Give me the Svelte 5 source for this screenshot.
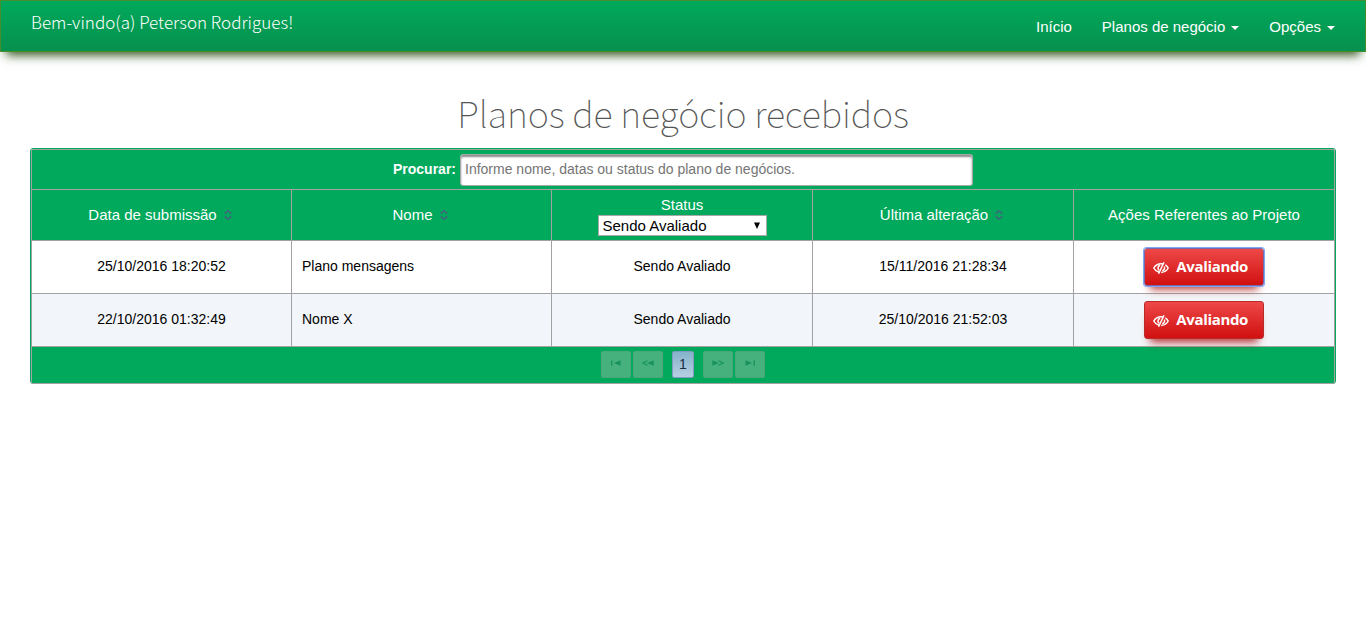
<script>
  const rows = [
    { sent: '25/10/2016 18:20:52', name: 'Plano mensagens', status: 'Sendo Avaliado', changed: '15/11/2016 21:28:34', focused: true },
    { sent: '22/10/2016 01:32:49', name: 'Nome X', status: 'Sendo Avaliado', changed: '25/10/2016 21:52:03', focused: false }
  ];
</script>

{#snippet sort()}
  <svg class="sort" width="8" height="10" viewBox="0 0 8 10"><path d="M.7 3.600 4 .8l3.300 2.800M.7 6.400 4 9.200l3.300-2.800" /></svg>
{/snippet}

<header>
  <div class="brand">Bem-vindo(a) Peterson Rodrigues!</div>
  <nav>
    <a href="#inicio">Início</a>
    <a href="#planos">Planos de negócio<i class="caret"></i></a>
    <a href="#opcoes">Opções<i class="caret"></i></a>
  </nav>
</header>

<main>
  <h1>Planos de negócio recebidos</h1>
  <section class="table">
    <div class="search">
      <label for="q">Procurar:</label>
      <input id="q" placeholder="Informe nome, datas ou status do plano de negócios." />
    </div>
    <div class="row head">
      <div class="sortable">Data de submissão{@render sort()}</div>
      <div class="sortable">Nome{@render sort()}</div>
      <div class="status">
        <span>Status</span>
        <div class="select"><span>Sendo Avaliado</span><svg width="6" height="7" viewBox="0 0 6 7"><path d="M0 .5h6L3 7z" /></svg></div>
      </div>
      <div class="sortable">Última alteração{@render sort()}</div>
      <div>Ações Referentes ao Projeto</div>
    </div>
    {#each rows as r, i}
      <div class="row data" class:even={i % 2 === 1}>
        <div>{r.sent}</div>
        <div class="left">{r.name}</div>
        <div>{r.status}</div>
        <div>{r.changed}</div>
        <div class="action">
          <button class:focused={r.focused}>
            <svg width="16" height="14" viewBox="0 0 16 14">
              <path d="M6 11.300C3.900 10.700 1.900 9.200.8 7 2.300 4.400 4.900 2.800 8 2.800c.7 0 1.400.1 2 .2M12.300 3.800c1.200.7 2.200 1.800 2.900 3.200-1.400 2.600-3.900 4.200-7 4.400" />
              <path d="M6.200 9.200C4.300 7.900 4.600 5 7.200 4.200M11.400 5.600c.7 1.900-.3 3.700-2.200 4.200" />
              <path d="M11 1.300 5.600 12.700" />
            </svg>
            <span>Avaliando</span>
          </button>
        </div>
      </div>
    {/each}
    <div class="pager">
      <span class="pg"><svg width="10" height="6" viewBox="0 0 10 6"><path d="M0 .5h1.400v5H0zM9.500 .2v5.600L3 3z" /></svg></span>
      <span class="pg"><svg width="12" height="6" viewBox="0 0 12 6"><path d="M11.700 .2v5.600L5.200 3z" /><path class="line" d="M5.500 .8 1 3l4.500 2.200" /></svg></span>
      <span class="pg current">1</span>
      <span class="pg"><svg width="12" height="6" viewBox="0 0 12 6"><path d="M.3 .2v5.600L6.800 3z" /><path class="line" d="M6.500 .8 11 3 6.500 5.200" /></svg></span>
      <span class="pg"><svg width="10" height="6" viewBox="0 0 10 6"><path d="M8.500 .5h1.400v5H8.500zM.5 .2v5.600L7 3z" /></svg></span>
    </div>
  </section>
</main>

<style>
  :global(body) { background: #fff; font: 14px/20px "Liberation Sans", Arial, sans-serif; color: #000; }
  * { box-sizing: border-box; }
  header {
    height: 52px; padding: 0 30px; display: flex; justify-content: space-between;
    color: #fff; border: 1px solid #458d2d; background: linear-gradient(#00a95b, #07904e);
    box-shadow: 0 9px 10px -6px #2d5016;
  }
  .brand { font: 300 17px/20px "Noto Sans CJK SC", sans-serif; padding-top: 11px; letter-spacing: 0.02px; }
  nav { display: flex; gap: 30px; padding-top: 16px; }
  nav a { color: #fff; text-decoration: none; font-size: 15px; line-height: 20px; white-space: nowrap; }
  .caret { display: inline-block; margin-left: 6px; vertical-align: middle; border: 4px solid transparent; border-top-color: #fff; border-bottom: 0; }
  main { padding: 0 30px; }
  h1 { margin: 0; height: 96px; padding-top: 36px; text-align: center; color: #555; font: 100 36px/48px "Noto Sans CJK SC", sans-serif; letter-spacing: -0.1px; }
  .table { border: 1px solid #00a95b; border-radius: 3px; height: 236px; }
  .search { height: 40px; border: 1px solid #a2a2a2; border-bottom: 0; border-radius: 2px 2px 0 0; background: #00a95b; display: flex; justify-content: center; align-items: center; gap: 4px; color: #fff; }
  label { font-weight: 700; font-size: 14px; padding-bottom: 2px; }
  input { width: 513px; height: 32px; padding: 0 4px 1px; border: 1px solid #a8a8a8; border-radius: 3px; box-shadow: inset 0 2px 2px #8a8a8a; font: 14px "Liberation Sans", Arial, sans-serif; }
  input::placeholder { color: #757575; }
  .row { display: grid; grid-template-columns: 260px 260px 261px 261px 262px; height: 53px; border-top: 1px solid #a2a2a2; }
  .row > div { border-left: 1px solid #a2a2a2; display: flex; justify-content: center; align-items: center; }
  .row > div:last-child { border-right: 1px solid #a2a2a2; }
  .head { height: 51px; background: #00a95b; color: #fff; font-size: 15px; }
  .row > .sortable { padding-right: 3px; }
  .data > div { padding-bottom: 3px; }
  .even { background: #f2f5f9; }
  .row > .left { justify-content: flex-start; padding-left: 10px; }
  .sort { margin-left: 7px; fill: none; stroke: #41647c; stroke-width: 1.500; }
  .row > .status { flex-direction: column; justify-content: flex-start; padding-top: 5px; }
  .status > span { line-height: 20px; }
  .select { width: 169px; height: 21px; border: 1px solid #a9a9a9; background: #fff; color: #000; display: flex; align-items: center; justify-content: space-between; padding: 0 6px 0 4px; line-height: 19px; }
  .select svg { margin-bottom: 1px; }
  .row > .action { align-items: flex-start; padding-top: 7px; }
  button {
    width: 120px; height: 38px; padding: 0 15px 0 8px; border: 1px solid #b92c28; border-radius: 3px;
    display: flex; align-items: center; justify-content: space-between; color: #fff;
    font: 700 15px/20px "Open Sans", sans-serif; letter-spacing: -0.35px; background: linear-gradient(#ee4848, #d11010);
    box-shadow: 0 9px 8px -6px #b52b2b;
  }
  button span { margin-bottom: 3px; }
  button.focused { border-color: #7568ad; box-shadow: 0 0 0 1px #7da7f0, 0 9px 8px -6px #b52b2b; }
  button svg { fill: none; stroke: #fff; stroke-width: 1.5; margin-top: 2px; }
  .pager { height: 38px; border: 1px solid #a2a2a2; border-radius: 0 0 2px 2px; background: #00a95b; display: flex; justify-content: center; align-items: center; gap: 2px; padding-bottom: 2px; }
  .pg { width: 30px; height: 27px; border: 1px solid #4ba679; border-radius: 2px; background: #47b17d; display: flex; justify-content: center; padding-top: 8px; }
  .pg svg { fill: #17925e; }
  .pg .line { fill: none; stroke: #17925e; stroke-width: 1.200; }
  .current { width: 22px; margin: 0 7px; padding: 0; align-items: center; border-color: #7f99c0; background: linear-gradient(#85b2cb, #b5cfe2); color: #1c2c3c; }
</style>
